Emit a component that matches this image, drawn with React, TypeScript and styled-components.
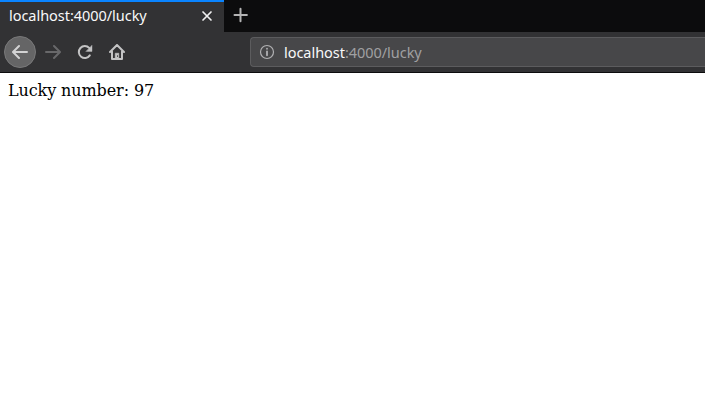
import React from "react";
import styled, { createGlobalStyle } from "styled-components";

const GlobalStyle = createGlobalStyle`
  * { box-sizing: border-box; }
  html, body { margin: 0; background: #fff; overflow: hidden; }
`;

const Browser = styled.div`
  display: flex;
  flex-direction: column;
  width: 100%;
  height: 100vh;
  background: #fff;
`;

const TabStrip = styled.div`
  display: flex;
  flex: none;
  height: 32px;
  background: #0c0c0d;
`;

const Tab = styled.div`
  display: flex;
  align-items: center;
  justify-content: space-between;
  width: 224px;
  height: 32px;
  padding: 0 11px 2px 9px;
  border-top: 2px solid #0a84ff;
  background: #323234;
`;

const Label = styled.span<{ $color: string }>`
  color: ${(p) => p.$color};
  font: 14.5px/20px "Noto Sans", "Open Sans", sans-serif;
  letter-spacing: -0.04px;
  white-space: nowrap;
`;

const TabTitle = styled(Label)`
  padding-bottom: 2px;
`;

const NewTab = styled.div`
  display: flex;
  align-items: center;
  justify-content: center;
  width: 34px;
  height: 30px;
`;

const Toolbar = styled.div`
  display: flex;
  flex: none;
  align-items: center;
  height: 41px;
  padding-left: 4px;
  background: #323234;
  border-bottom: 1px solid #0c0c0d;
`;

const ToolButton = styled.div<{ $round?: boolean }>`
  display: flex;
  align-items: center;
  justify-content: center;
  flex: none;
  width: 32px;
  height: 32px;
  margin-right: ${(p) => (p.$round ? "1px" : "0")};
  border-radius: 50%;
  border: ${(p) => (p.$round ? "1px solid #79797a" : "0")};
  background: ${(p) => (p.$round ? "#656566" : "transparent")};
`;

const Navigation = styled.div`
  display: flex;
  flex: none;
  width: 246px;
`;

const AddressBar = styled.div`
  display: flex;
  flex: 1;
  align-items: center;
  gap: 9px;
  height: 30px;
  padding-left: 8px;
  border: 1px solid #5c5c5e;
  border-right: 0;
  border-radius: 4px 0 0 4px;
  background: #474749;
`;

const Page = styled.main`
  padding: 8px;
  color: #000;
  font: 16px/19px "DejaVu Serif", serif;
  letter-spacing: -0.1px;
`;

const Icon = styled.svg`
  display: block;
  flex: none;
  fill: none;
  stroke-linecap: round;
  stroke-linejoin: round;
`;

export default function App() {
  return (
    <Browser>
      <GlobalStyle />
      <TabStrip>
        <Tab>
          <TabTitle $color="#f9f9fa">localhost:4000/lucky</TabTitle>
          <Icon width="12" height="12" viewBox="0 0 12 12" stroke="#f0f0f1" strokeWidth="1.7">
            <path d="M2 2l8 8M10 2l-8 8" />
          </Icon>
        </Tab>
        <NewTab>
          <Icon width="16" height="16" viewBox="0 0 16 16" stroke="#b3b3b4" strokeWidth="2">
            <path d="M7.5 1.8v12.4M1.5 8h12.4" />
          </Icon>
        </NewTab>
      </TabStrip>
      <Toolbar>
        <Navigation>
          <ToolButton $round>
            <Icon width="16" height="16" viewBox="0 0 16 16" stroke="#d3d3d4" strokeWidth="2">
              <path d="M15 8H1.5M7 2L1 8l6 6" />
            </Icon>
          </ToolButton>
          <ToolButton>
            <Icon width="16" height="16" viewBox="0 0 16 16" stroke="#68686a" strokeWidth="2">
              <path d="M1 8h13.5M9 2l6 6-6 6" />
            </Icon>
          </ToolButton>
          <ToolButton>
            <Icon width="16" height="16" viewBox="0 0 16 16" stroke="#c3c3c4" strokeWidth="2">
              <path d="M12.8 11.4A6 6 0 1 1 12.2 3.9" />
              <path d="M15 1.5v5.9H9.1z" fill="#c3c3c4" strokeWidth="0.4" />
            </Icon>
          </ToolButton>
          <ToolButton>
            <Icon width="16" height="16" viewBox="0 0 16 16" stroke="#c3c3c4" strokeWidth="2">
              <path d="M1 8l7-7 7 7M3 7.5V15h10V7.5" />
              <path d="M6.2 14V9.2h3.6V14" fill="#c3c3c4" strokeWidth="0.5" />
              <path d="M8.5 11.8v.6" stroke="#323234" strokeWidth="1" />
            </Icon>
          </ToolButton>
        </Navigation>
        <AddressBar>
          <Icon width="16" height="16" viewBox="0 0 16 16" stroke="#b1b1b3" strokeWidth="1.2">
            <circle cx="8" cy="8" r="6.5" />
            <path d="M8 7.3v4M8 4.7v.1" strokeWidth="1.8" />
          </Icon>
          <Label $color="#a0a0a2">
            <Label $color="#f9f9fa">localhost</Label>:4000/lucky
          </Label>
        </AddressBar>
      </Toolbar>
      <Page>Lucky number: 97</Page>
    </Browser>
  );
}
